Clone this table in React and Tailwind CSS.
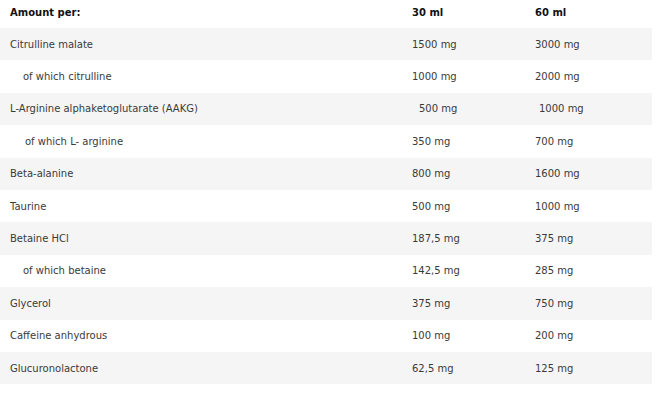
import React from "react";

const rows = [
  ["Citrulline malate", "1500 mg", "3000 mg", 0],
  ["of which citrulline", "1000 mg", "2000 mg", 1],
  ["L-Arginine alphaketoglutarate (AAKG)", "500 mg", "1000 mg", 0, true],
  ["of which L- arginine", "350 mg", "700 mg", 2],
  ["Beta-alanine", "800 mg", "1600 mg", 0],
  ["Taurine", "500 mg", "1000 mg", 0],
  ["Betaine HCl", "187,5 mg", "375 mg", 0],
  ["of which betaine", "142,5 mg", "285 mg", 1],
  ["Glycerol", "375 mg", "750 mg", 0],
  ["Caffeine anhydrous", "100 mg", "200 mg", 0],
  ["Glucuronolactone", "62,5 mg", "125 mg", 0],
];

export default function App() {
  return (
    <div className="w-[658px] h-[401px] bg-white overflow-hidden text-[10px]" style={{ fontFamily: '"DejaVu Sans", sans-serif' }}>
      <div className="w-[652px]">
        <div className="grid grid-cols-[402px_123px_127px] h-[28px] pb-[4px] items-center font-bold text-[#111]">
          <div className="pl-[10px]">Amount per:</div>
          <div className="pl-[10px]">30 ml</div>
          <div className="pl-[10px]">60 ml</div>
        </div>
        {rows.map(([name, a, b, ind, shift], i) => (
          <div
            key={i}
            className={`grid grid-cols-[402px_123px_127px] h-[32.4px] items-center text-[#3a3a3a] ${i % 2 === 0 ? "bg-[#f5f5f5]" : "bg-white"}`}
          >
            <div className={ind === 1 ? "pl-[23px]" : ind === 2 ? "pl-[25px]" : "pl-[10px]"}>{name}</div>
            <div className={shift ? "pl-[17px]" : "pl-[10px]"}>{a}</div>
            <div className={shift ? "pl-[14px]" : "pl-[10px]"}>{b}</div>
          </div>
        ))}
      </div>
    </div>
  );
}
